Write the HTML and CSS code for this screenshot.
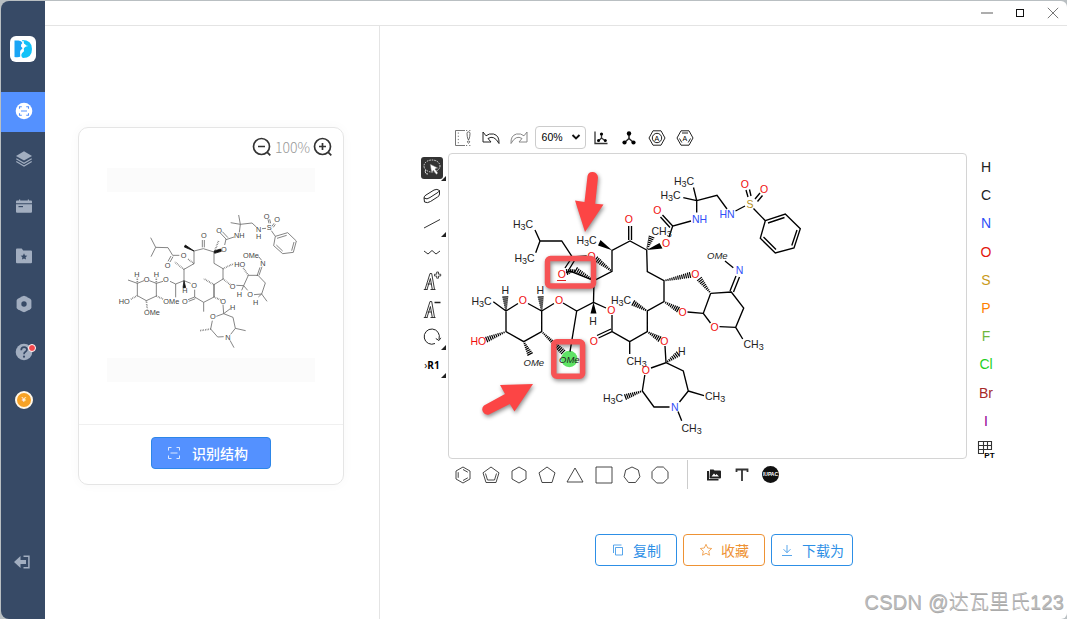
FILE: index.html
```
<!DOCTYPE html>
<html lang="zh-CN">
<head>
    <meta charset="UTF-8">
    <meta name="viewport" content="width=device-width, initial-scale=1.0">
    <title>识别结构</title>
    <link rel="stylesheet" href="styles.css">
</head>
<body>
    <div class="window">
        <nav class="sidebar">
            <div class="logo">
                <svg width="20" height="20" viewBox="0 0 20 20"><path d="M1.500 1.500h4q3 0 4 2.500q-2 1-1.500 3.500l2 2q-3 1-3 4l1 3.500q-2 2-6.500 1z" fill="#1aa5f5"/><path d="M9 1q10 0 10 9t-9 9q-3-2-2-4l3-3q-1-3 1-4l1-2q-3-1-4-5z" fill="#12c2f8"/><path d="M10 2q0 4 3 5q-4 1-3 5q-3 2-2 6" fill="none" stroke="#fff" stroke-width="1.200"/></svg>
            </div>
            <div class="nav-item active">
                <svg width="18" height="18" viewBox="0 0 18 18"><circle cx="9" cy="9" r="8.300" fill="#fff"/><path d="M4.500 6.800V4.700h2.300M11.200 4.700h2.300v2.100M13.500 11.200v2.100h-2.300M6.800 13.300H4.500v-2.100M6 9h6" fill="none" stroke="#5491ff" stroke-width="1.100"/></svg>
            </div>
            <div class="nav-item">
                <svg width="18" height="18" viewBox="0 0 18 18"><path d="M9 1.200L17 6 9 10.600 1 6z" fill="#a2aec0"/><path d="M1.300 8.800L9 13.200l7.700-4.400M1.300 11.600L9 16l7.700-4.400" fill="none" stroke="#a2aec0" stroke-width="1.200"/></svg>
            </div>
            <div class="nav-item">
                <svg width="18" height="18" viewBox="0 0 18 18"><path d="M1 5.200V3.500q0-1 1-1h2V1.400h1.200v1.100h7.600V1.400H14v1.100h2q1 0 1 1v1.700zM1 6.300h16v7.500q0 1-1 1H2q-1 0-1-1z" fill="#a2aec0"/><path d="M3.500 8.600H8" stroke="#374a66" stroke-width="1.200"/></svg>
            </div>
            <div class="nav-item">
                <svg width="18" height="18" viewBox="0 0 18 18"><path d="M1 2.600q0-1 1-1h4.700l1.500 1.900H16q1 0 1 1v10.700q0 1-1 1H2q-1 0-1-1z" fill="#a2aec0"/><path d="M9 6.300l1 2.100 2.300.3-1.700 1.600.4 2.300-2-1.100-2 1.100.4-2.300-1.700-1.600 2.300-.3z" fill="#374a66"/></svg>
            </div>
            <div class="nav-item">
                <svg width="18" height="18" viewBox="0 0 18 18"><path d="M7.600 1.200q1.400-.7 2.800 0l4.800 2.600q1.200.8 1.200 2v6.400q0 1.300-1.200 2l-4.800 2.600q-1.400.7-2.800 0l-4.800-2.600q-1.200-.7-1.200-2V5.800q0-1.200 1.200-2z" fill="#a2aec0"/><circle cx="9" cy="9" r="2.700" fill="#374a66"/></svg>
            </div>
            <div class="nav-item">
                <svg width="18" height="18" viewBox="0 0 18 18"><circle cx="9" cy="9" r="8.300" fill="#a2aec0"/><path d="M6.200 7.200q0-3 2.900-3t2.900 2.400q0 1.300-1.500 2.200T9 11.200" fill="none" stroke="#374a66" stroke-width="1.700"/><circle cx="9" cy="13.700" r="1.100" fill="#374a66"/></svg>
                <span class="dot"></span>
            </div>
            <div class="nav-item">
                <div class="coin">¥</div>
            </div>
            <div class="nav-item logout">
                <svg width="18" height="16" viewBox="0 0 18 16"><path d="M1 8l6.500-6v4h5.500v4H7.500v4z" fill="#a2aec0"/><path d="M10.500 2.200h5.400v11.600h-5.400" fill="none" stroke="#a2aec0" stroke-width="1.500"/></svg>
            </div>
        </nav>

        <div class="page">
            <header class="titlebar">
                <svg width="12" height="12" viewBox="0 0 12 12"><path d="M0 6h12" stroke="#777" stroke-width="1.200"/></svg>
                <svg width="12" height="12" viewBox="0 0 12 12"><rect x="2.500" y="2.500" width="7" height="7" fill="none" stroke="#111"/></svg>
                <svg width="12" height="12" viewBox="0 0 12 12"><path d="M.8 .8l10.400 10.400M11.200 .8L.8 11.200" stroke="#777"/></svg>
            </header>

            <div class="content">
                <section class="source">
                    <div class="card">
                        <div class="zoom-bar">
                            <svg width="20" height="20" viewBox="0 0 20 20"><circle cx="9.500" cy="9.500" r="8" /><path d="M6 9.500h7M15.300 15.300l3 3"/></svg>
                            <span>100%</span>
                            <svg width="20" height="20" viewBox="0 0 20 20"><circle cx="9.500" cy="9.500" r="8" /><path d="M6 9.500h7M9.500 6v7M15.300 15.300l3 3"/></svg>
                        </div>
                        <div class="preview">
                            <div class="band"></div>
                            <svg class="scan" width="210" height="155" viewBox="0 0 630 465">
                                <path d="M152 113l15 29l-14 28M167 142l37 1l14 23l20 0M213 168l-9 16M219 170l-9 16M282 153l0 38l-30 17v34M282 153l28-7M310 146l32 10M307 142v-22M313 142v-22M342 156v34l27 16v31l-27 17v37l-31 16M342 254v37M311 307v28M311 307l-27-16M284 291v-22M284 291l-20 8M286 296l-20 8M252 242l20 8M227 252v40M227 252l-17-8M227 252l25-10M189 244l-20 6M169 250v38l-30 14l-27-15v-37l20-8M148 242l21 8M112 250l-28-10M378 117l-17-18M384 113l-17-18M378 119l24-8M378 117l-4 18M421 73l-5-28M421 73l-29-5M418 97l3-24l35-4l14 13M486 86l12-1M507 70l-3-12M512 70l-3-12M516 79l6-9M520 82l6-9M514 92l12 17M526 109l37-11l26 25l-9 34l-32 4l-27-24zM531 115l29-9M582 126l-7 26M548 153l-19-18M476 170l9 11M486 200l-9 26M480 202l-9 26M474 226l-29 0l-14 31l12 14M474 226l22 23l-11 33l-23 2M485 282l16 22M431 257l-22-1M431 257l-6 14M485 282l-10 9M369 314l2 27l-22 8M371 341l28 11l7 33l-14 18M406 385l31 7M332 387l5-25M332 387l21 24l18-1M390 421l12 22M371 341l20-15"/>
                                <path class="heavy" d="M282 153l-29-12l3-6zM342 153l20-6l2 7l-20 6zM252 242l5 21l-8 0z"/>
                                <path class="dashed" d="M344 153l12-31M282 191l-20-15M252 208l-28-22M342 254l-31-18M369 206l32-15M369 237l22 17M342 291l20 9M169 250v-18M112 250v-18M112 287l-22 12M139 302l3 26M169 288l22 10M445 226l-15-22M332 387l-33 5"/>
                                <g class="scan-text">
                                    <text x="303" y="115">O</text><text x="349" y="99">O</text><text x="363" y="155">O</text><text x="402" y="113">NH</text><text x="468" y="95">N</text><text x="468" y="118">H</text><text x="500" y="91">S</text><text x="491" y="57">O</text><text x="523" y="65">O</text><text x="242" y="173">O</text><text x="194" y="204">O</text><text x="103" y="230">H</text><text x="161" y="230">H</text><text x="131" y="246">O</text><text x="189" y="246">O</text><text x="247" y="280">H</text><text x="274" y="264">O</text><text x="246" y="312">O</text><text x="190" y="312">OMe</text><text x="56" y="312">HO</text><text x="132" y="345">OMe</text><text x="361" y="312">O</text><text x="390" y="329">H</text><text x="330" y="358">O</text><text x="376" y="419">N</text><text x="389" y="266">O</text><text x="403" y="202">HO</text><text x="429" y="173">OMe</text><text x="481" y="198">N</text><text x="410" y="290">H</text><text x="442" y="291">O</text><text x="459" y="314">H</text>
                                </g>
                            </svg>
                            <div class="band"></div>
                        </div>
                        <div class="card-footer">
                            <button class="btn-primary">
                                <svg width="14" height="14" viewBox="0 0 14 14"><path d="M1.500 4.500v-3h3M9.500 1.500h3v3M12.500 9.500v3h-3M4.500 12.500h-3v-3M3.500 7h7"/></svg>
                                识别结构
                            </button>
                        </div>
                    </div>
                </section>

                <section class="result">
                    <div class="editor">
                        <div class="tools-top">
                            <div class="tool"><svg width="20" height="20" viewBox="0 0 20 20"><path d="M12 2.500H2.500v15H12" fill="none" stroke="#666" stroke-width=".9"/><path d="M5.300 4.500v12M13 2.500h5M13 17.500h5" stroke="#777" stroke-dasharray="1.200 2"/><path d="M14 5.500q0-1.700 1.500-1.700t1.500 1.700q0 2.500-1 6h-1q-1-3.500-1-6zM15.500 13a1 1 0 1 0 .1 0" fill="none" stroke="#444" stroke-width=".8"/></svg></div>
                            <div class="tool"><svg width="20" height="20" viewBox="0 0 20 20"><path d="M2 4v10h8l-3-3.500q6-4 11 5q.5-8-5.500-9.500q-4.500-.8-7.500 1.800z" fill="none" stroke="#222"/></svg></div>
                            <div class="tool"><svg width="20" height="20" viewBox="0 0 20 20"><path d="M18 4v10h-8l3-3.500q-6-4-11 5q-.5-8 5.500-9.500q4.500-.8 7.500 1.800z" fill="none" stroke="#888"/></svg></div>
                            <div class="zoom-select">60%<svg width="10" height="8" viewBox="0 0 10 8"><path d="M1.500 2l3.500 3.500L8.500 2" fill="none" stroke="#111" stroke-width="1.900"/></svg></div>
                            <div class="tool"><svg width="16" height="16" viewBox="0 0 16 16"><path d="M2 1.500v12h12.500M8.500 4v4l-3 3M8.500 8l4 3" fill="none" stroke="#333" stroke-width="1.300"/><circle cx="8.500" cy="4" r="1.600"/><circle cx="5.500" cy="10.500" r="1.500"/><circle cx="12.300" cy="10.500" r="1.500"/></svg></div>
                            <div class="tool"><svg width="16" height="16" viewBox="0 0 16 16"><path d="M8 3.500v5L3.500 12.500M8 8.500l4.500 4" fill="none" stroke="#222" stroke-width="1.500"/><circle cx="8" cy="3.500" r="2.200"/><circle cx="3.500" cy="12.500" r="2.100"/><circle cx="12.500" cy="12.500" r="2.100"/></svg></div>
                            <div class="tool"><svg width="18" height="18" viewBox="0 0 18 18"><path d="M5 1.800h8L17 9l-4 7.200H5L1 9z" fill="none" stroke="#222"/><circle cx="9" cy="9" r="4.700" fill="none" stroke="#222"/><text x="6.600" y="11.500" font-size="7">A</text></svg></div>
                            <div class="tool"><svg width="18" height="18" viewBox="0 0 18 18"><path d="M5 1.800h8L17 9l-4 7.200H5L1 9zM6 4h6M14.500 9.500l-2.300 4M3.500 9.500l2.300 4" fill="none" stroke="#222"/><text x="6.600" y="11.500" font-size="7">A</text></svg></div>
                        </div>

                        <div class="tools-left">
                            <div class="tool selected more"><svg width="22" height="22" viewBox="0 0 22 22"><ellipse cx="11" cy="9" rx="8" ry="6" fill="none" stroke="#ddd" stroke-dasharray="1.500 1"/><path d="M4.500 13q-1 4 2.500 4" fill="none" stroke="#ddd"/><path d="M9 7l8 4-3 1 3 4-1.700 1.400-3-4-1.600 2.700z" fill="#fff" stroke="#555" stroke-width=".5"/></svg></div>
                            <div class="tool"><svg width="20" height="20" viewBox="0 0 20 20"><path d="M2 12q0-2 2-3l8-5q3-1.500 5.500.5v3.500q0 2-2 3l-7 4.500q-3 2-6 .5zM2 12q3 2 6-.5l7-4.500q2-1 2.500-2.500" fill="none" stroke="#222"/></svg></div>
                            <div class="tool more"><svg width="20" height="20" viewBox="0 0 20 20"><path d="M2 14L18 5.500" stroke="#333"/></svg></div>
                            <div class="tool"><svg width="20" height="20" viewBox="0 0 20 20"><path d="M2 8l4 3 4-3.500 4 3.500 4-3" fill="none" stroke="#333"/></svg></div>
                            <div class="tool"><svg width="20" height="20" viewBox="0 0 20 20"><path d="M1.800 18.500h3.800M8.500 18.500h5M3 18.500L8 2.500h1.700l2.800 16M5 18.500l3.400-11 1.900 11M5.500 13h4" fill="none" stroke="#222" stroke-width=".9"/><path d="M12.500 3.200h2.200V1h1.800v2.200h2.200v1.800h-2.200v2.200h-1.800v-2.200h-2.200z" fill="none" stroke="#222" stroke-width=".8"/></svg></div>
                            <div class="tool"><svg width="20" height="20" viewBox="0 0 20 20"><path d="M1.800 18.500h3.800M8.500 18.500h5M3 18.500L8 2.500h1.700l2.800 16M5 18.500l3.400-11 1.900 11M5.500 13h4" fill="none" stroke="#222" stroke-width=".9"/><path d="M12.500 3.500h6" stroke="#222" stroke-width="1.500"/></svg></div>
                            <div class="tool more"><svg width="20" height="20" viewBox="0 0 20 20"><path d="M13 16.500A7.600 7.600 0 1 1 17 12" fill="none" stroke="#222"/><path d="M13.800 11.500l3.200 2 1.800-2.700" fill="none" stroke="#222"/></svg></div>
                            <div class="tool more r-group"><span>›</span>R1</div>
                        </div>

                        <div class="canvas">
                            <svg id="molecule" width="517" height="304" viewBox="449 154 517 304">
                                <circle cx="569.300" cy="359" r="8.300" fill="#5fe365"/>
                                <path class="bond" d="M693.500 187.500L696.700 200.700L683.300 197.700M696.700 200.700L717 195.300L727 209M696.700 200.700V212.500M735.500 211L745 206M753.500 208.500L765.300 220.700M765.300 220.700L785.300 214L800.300 228.700L794 248L775.300 253L760.300 238.300ZM768 223L784.500 217.500M797 230L791.800 245.500M776 249.500L763.500 237M691 221L672.700 226L669 237M672.700 226L662.500 215M670 227.500L660.500 217M646.700 250L630 241L612 250.300V271.300L594 280.700L593.500 302.300L576.700 311L563 303M628.700 240V226M631.500 240V226M646.700 250L647.300 271.700L664 280.700V301.700L647.300 311V331.700L629.700 341.700V354M629.700 341.700L612 331.700V315M612 331.700L598.500 338M611 329L597 335.500M593.500 302.300L606 308M586.700 256L572.300 257L561.700 241H540L535 230M540 241L535.700 252.700M572.300 257L565 268M576 258L569 269.500M594 280.700L570 271L566 272.500M493.300 301.700L506 311L518 303.500M528 303.500L541.700 311L554 303.500M541.700 311V331.700L523.700 341.700L506 331.700V311M576.700 311L570 351.700M746 190L748 197M749.500 189.500L751 196M755 199L760 193M757.500 201.500L762.500 195.500M710.700 293.300L731.300 292L743.700 308L735.700 327.300L719.500 326.700M710.700 293.300L703.300 313.300L710.500 323M703.300 313.300L687.500 312M735.700 327.300L742.700 339M730 291L736 276M733.500 292L739.500 277M733.300 267.700L725 261M665 346L666 362.700L651 368M666 362.700L683.300 371L688.300 391L679.500 402M688.300 391L704 395.700M669.500 407L654 407L642.300 391L644.800 375M678 411.500L681.700 420.700"/>
                                <path class="wedge" d="M646.700 250L659.500 243L662.500 248.500ZM612 250.300L600.500 240L598 245.500ZM593.500 302.300L590.500 313.500H596.500Z"/>
                                <!-- hashed bonds are added by script.js -->
                                <g class="label">
                                    <text x="674" y="184.500">H<tspan>3</tspan>C</text>
                                    <text x="660.500" y="199">H<tspan>3</tspan>C</text>
                                    <text x="651.500" y="234.500">CH<tspan>3</tspan></text>
                                    <text x="576.500" y="243.500">H<tspan>3</tspan>C</text>
                                    <text x="513" y="227.500">H<tspan>3</tspan>C</text>
                                    <text x="514.500" y="262">H<tspan>3</tspan>C</text>
                                    <text x="471.500" y="304.500">H<tspan>3</tspan>C</text>
                                    <text x="501.500" y="293.500">H</text>
                                    <text x="536.500" y="293.500">H</text>
                                    <text x="589.200" y="324.500">H</text>
                                    <text x="678" y="354.500">H</text>
                                    <text x="611" y="304">H<tspan>3</tspan>C</text>
                                    <text x="626.500" y="364.500">CH<tspan>3</tspan></text>
                                    <text x="743.500" y="347.500">CH<tspan>3</tspan></text>
                                    <text x="603" y="401.500">H<tspan>3</tspan>C</text>
                                    <text x="705" y="400">CH<tspan>3</tspan></text>
                                    <text x="681.500" y="431.500">CH<tspan>3</tspan></text>
                                    <text class="ome" x="707" y="258.500">OMe</text>
                                    <text class="ome" x="523.500" y="365.500">OMe</text>
                                    <text class="ome" x="559" y="362.500">OMe</text>
                                </g>
                                <g class="label oxygen">
                                    <text x="624.700" y="222.500">O</text>
                                    <text x="653.300" y="213.500">O</text>
                                    <text x="662" y="247">O</text>
                                    <text x="740.700" y="187.500">O</text>
                                    <text x="760" y="192.500">O</text>
                                    <text x="587.500" y="259.500">O</text>
                                    <text x="557.700" y="277.500">O</text>
                                    <text x="518.800" y="304">O</text>
                                    <text x="555" y="304">O</text>
                                    <text x="607.300" y="314">O</text>
                                    <text x="589.800" y="344.500">O</text>
                                    <text x="470.500" y="344.500">HO</text>
                                    <text x="691.200" y="278">O</text>
                                    <text x="678.500" y="315.500">O</text>
                                    <text x="710.500" y="330.500">O</text>
                                    <text x="660.200" y="345">O</text>
                                    <text x="641.700" y="374">O</text>
                                </g>
                                <path d="M557 280.500h9" stroke="#d22" stroke-width="1"/>
                                <g class="label nitrogen">
                                    <text x="692" y="222.500">NH</text>
                                    <text x="719.500" y="218">HN</text>
                                    <text x="735.700" y="274">N</text>
                                    <text x="671" y="410.500">N</text>
                                </g>
                                <text class="sulfur" x="746.500" y="208">S</text>
                                <g class="marks">
                                    <rect x="547.500" y="258.500" width="46" height="27.500" rx="3"/>
                                    <rect x="553.800" y="341.800" width="28.800" height="34.500" rx="3"/>
                                    <path d="M587.500 176q1-4.500 5.500-4t5 5.500l-2.800 26.300l8.300 .8L585 232L575 200.500l9.500 1.500z"/>
                                    <path d="M484 405.500L505 394l-5-9l33-1l-18.500 27.500l-4.700-7.500L489 414.500q-4 1-6-2.500t1-6.500z"/>
                                </g>
                            </svg>
                        </div>

                        <div class="atoms">
                            <div class="atom">H</div>
                            <div class="atom">C</div>
                            <div class="atom n">N</div>
                            <div class="atom o">O</div>
                            <div class="atom s">S</div>
                            <div class="atom p">P</div>
                            <div class="atom f">F</div>
                            <div class="atom cl">Cl</div>
                            <div class="atom br">Br</div>
                            <div class="atom i">I</div>
                            <div class="atom"><svg width="18" height="18" viewBox="0 0 18 18"><path d="M1.500 1.500h13v8h-8v4h-5zM1.500 5.500h13M1.500 9.500h5M6.500 1.500v8M10.500 1.500v8" fill="none" stroke="#333" stroke-width="1.100"/><text x="7.300" y="17.500" font-size="8" font-weight="bold">PT</text></svg></div>
                        </div>

                        <div class="tools-bottom">
                            <div class="tool"><svg class="ring" width="20" height="20" viewBox="0 0 20 20"><path d="M10 2l7 4v8l-7 4-7-4V6zM10 4.500l4.800 2.700M14.800 12.800L10 15.500M5.200 7.200v5.600"/></svg></div>
                            <div class="tool"><svg class="ring" width="20" height="20" viewBox="0 0 20 20"><path d="M10 2l8 5.800L15 17.500H5L2 7.800zM4.500 8.500l2 6.500M15.500 8.500l-2 6.500M6.500 15h7"/></svg></div>
                            <div class="tool"><svg class="ring" width="20" height="20" viewBox="0 0 20 20"><path d="M10 2l7 4v8l-7 4-7-4V6z"/></svg></div>
                            <div class="tool"><svg class="ring" width="20" height="20" viewBox="0 0 20 20"><path d="M10 2l8 5.800L15 17.500H5L2 7.800z"/></svg></div>
                            <div class="tool"><svg class="ring" width="20" height="20" viewBox="0 0 20 20"><path d="M10 3l8 14H2z"/></svg></div>
                            <div class="tool"><svg class="ring" width="20" height="20" viewBox="0 0 20 20"><path d="M2 2h16v16H2z"/></svg></div>
                            <div class="tool"><svg class="ring" width="20" height="20" viewBox="0 0 20 20"><path d="M10 2l6.300 3 1.600 6.800-4.400 5.700h-7l-4.400-5.700L3.700 5z"/></svg></div>
                            <div class="tool"><svg class="ring" width="20" height="20" viewBox="0 0 20 20"><path d="M6.700 2h6.600L18 6.700v6.600L13.300 18H6.700L2 13.300V6.700z"/></svg></div>
                            <div class="divider"></div>
                            <div class="tool"><svg width="16" height="16" viewBox="0 0 16 16"><path d="M1 4v9.500h11.500V12H3V4zM4 2.500h3.500l1 1H14q1 0 1 1v6q0 1-1 1H4.500q-1 0-1-1z" fill="#222"/><path d="M5.500 9.500l2.500-3 1.500 1.800 1-1.300 2.500 2.500z" fill="#fff"/></svg></div>
                            <div class="tool"><svg width="16" height="16" viewBox="0 0 16 16"><path d="M2.500 5V2.500h11V5M8 2.500V14" fill="none" stroke="#333" stroke-width="1.800"/></svg></div>
                            <div class="tool"><div class="iupac">IUPAC</div></div>
                        </div>
                    </div>

                    <div class="actions">
                        <button class="btn"><svg width="14" height="14" viewBox="0 0 14 14"><path d="M4.500 4.500h7v7.500h-7zM2.500 10V2h8"/></svg>复制</button>
                        <button class="btn orange"><svg width="14" height="14" viewBox="0 0 14 14"><path d="M7 1.300l1.700 3.700 4 .5-3 2.700.8 4L7 10.300l-3.500 1.900.8-4-3-2.700 4-.5z"/></svg>收藏</button>
                        <button class="btn"><svg width="14" height="14" viewBox="0 0 14 14"><path d="M7 2v7.500M3.500 6.200L7 9.700l3.500-3.500M2 12.500h10"/></svg>下载为</button>
                    </div>
                </section>
            </div>
        </div>
    </div>
    <div class="watermark">CSDN @达瓦里氏123</div>

    <script src="script.js"></script>
</body>
</html>
```

FILE: styles.css
```
* {
    box-sizing: border-box;
}
body, html {
    height: 100%;
    margin: 0;
    overflow: hidden;
    font-family: 'Liberation Sans', 'Noto Sans CJK SC', sans-serif;
    background-color: #b9bfc2;
}
svg {
    display: block;
    flex: none;
}
.window {
    display: flex;
    height: 100%;
    padding: 1px 0 0 1px;
}
.sidebar {
    width: 44px;
    display: flex;
    flex-direction: column;
    align-items: center;
    gap: 8.2px;
    padding: 35px 0 37px;
    background-color: #374a66;
    border-radius: 8px 0 0 8px;
}
.logo {
    width: 26px;
    height: 26px;
    margin-bottom: 21.8px;
    display: flex;
    align-items: center;
    justify-content: center;
    background-color: #fff;
    border-radius: 6px;
}
.nav-item {
    position: relative;
    width: 44px;
    height: 40px;
    flex: none;
    display: flex;
    align-items: center;
    justify-content: center;
    padding: 0 0 2px 2px;
}
.nav-item.active {
    background-color: #5491ff;
}
.dot {
    position: absolute;
    top: 11px;
    left: 27px;
    width: 8px;
    height: 8px;
    background-color: #f5484d;
    border: 1px solid #fff;
    border-radius: 50%;
}
.coin {
    width: 18px;
    height: 18px;
    border: 2px solid #fff7e8;
    border-radius: 50%;
    background-color: #f7a226;
    color: #fff;
    font-size: 8px;
    line-height: 14px;
    text-align: center;
}
.logout {
    margin-top: auto;
    padding: 0 2px 0 0;
}
.page {
    flex: 1;
    display: flex;
    flex-direction: column;
    background-color: #fff;
    border-radius: 0 6px 6px 0;
}
.titlebar {
    height: 25px;
    display: flex;
    align-items: center;
    justify-content: flex-end;
    gap: 21px;
    padding-right: 8px;
    border-bottom: 1px solid #e4e4e4;
}
.content {
    flex: 1;
    display: flex;
}

/* left pane */
.source {
    width: 335px;
    padding: 101px 0 0 33px;
    border-right: 1px solid #e4e4e4;
}
.card {
    width: 266px;
    height: 358px;
    display: flex;
    flex-direction: column;
    border: 1px solid #e5e5e5;
    border-radius: 10px;
    box-shadow: 0 0 12px rgba(0, 0, 0, 0.03);
}
.zoom-bar {
    height: 40px;
    display: flex;
    align-items: center;
    justify-content: flex-end;
    gap: 3px;
    padding: 0 10px 3px 0;
    color: #999;
    font-family: 'Noto Sans CJK SC', sans-serif;
    font-size: 14px;
    font-weight: 300;
}
.zoom-bar svg {
    fill: none;
    stroke: #333;
    stroke-width: 1.7;
}
.preview {
    flex: 1;
    padding: 0 28px;
}
.band {
    height: 24px;
    background-color: #fbfbfb;
}
.scan {
    margin: 8px 0 3px -7px;
    fill: none;
    stroke: #666;
    stroke-width: 2.4;
}
.heavy {
    fill: #111;
    stroke: #111;
}
.dashed {
    stroke-width: 5;
    stroke-dasharray: 2 3;
}
.scan-text {
    fill: #444;
    stroke: none;
    font-size: 22px;
}
.card-footer {
    height: 60px;
    display: flex;
    justify-content: center;
    padding-top: 12px;
    border-top: 1px solid #f0f0f0;
}
button {
    font-family: 'Noto Sans CJK SC', sans-serif;
    font-size: 14px;
    border-radius: 4px;
    padding: 0;
    display: flex;
    align-items: center;
    justify-content: center;
}
button svg {
    fill: none;
    stroke: currentColor;
    stroke-width: 0.8;
}
.btn-primary {
    width: 120px;
    height: 32px;
    gap: 11px;
    padding-right: 7px;
    border: 1px solid #2d86e8;
    background-color: #5491ff;
    color: #fff;
    font-weight: 500;
}

/* right pane */
.result {
    flex: 1;
    padding: 97px 0 0 36px;
}
.editor {
    display: grid;
    grid-template-columns: 32px 519px 38px;
    grid-template-rows: 30px 306px 32px;
}
.tool {
    position: relative;
    width: 28.2px;
    height: 28px;
    flex: none;
    display: flex;
    align-items: center;
    justify-content: center;
}
.tools-top {
    grid-column: 2;
    grid-row: 1;
    display: flex;
    align-items: center;
    padding-left: 0.6px;
}
.zoom-select {
    width: 51px;
    height: 23px;
    margin: 0 1px 2px 1.4px;
    padding: 0 4px 0 6px;
    display: flex;
    align-items: center;
    justify-content: space-between;
    border: 1px solid #ccc;
    border-radius: 4px;
    font-size: 10.5px;
}
.tools-left {
    grid-column: 1;
    grid-row: 2;
    display: flex;
    flex-direction: column;
    align-items: center;
    padding-top: 1px;
    gap: 0.2px;
}
.selected svg {
    background-color: #333;
    border-radius: 3px;
}
.more::after {
    content: '';
    position: absolute;
    right: 0;
    bottom: 1px;
    border-left: 5px solid transparent;
    border-bottom: 5px solid #222;
}
.r-group {
    font-family: 'Open Sans', sans-serif;
    font-size: 10px;
    font-weight: bold;
}
.r-group span {
    font-weight: normal;
}
.canvas {
    grid-column: 2;
    grid-row: 2;
    border: 1px solid #d4d4d4;
    border-radius: 4px;
}
.bond {
    fill: none;
    stroke: #000;
    stroke-width: 1.35;
}
.wedge {
    fill: #000;
}
.hash {
    stroke: #000;
    stroke-width: 1.2;
}
.label {
    font-size: 10.5px;
    fill: #222;
}
.label tspan {
    font-size: 9px;
    baseline-shift: -1.5px;
}
.label .ome {
    font-size: 9.5px;
    font-style: italic;
}
.label.oxygen {
    fill: #f00d0d;
}
.label.nitrogen {
    fill: #304ff7;
}
.sulfur {
    font-size: 10.5px;
    fill: #b38c1a;
}
.marks {
    fill: #fc4545;
    filter: drop-shadow(1px 2px 2px rgba(0, 0, 0, 0.45));
}
.marks rect {
    fill: none;
    stroke: #f65355;
    stroke-width: 5.5;
}
.atoms {
    grid-column: 3;
    grid-row: 2;
    display: flex;
    flex-direction: column;
}
.atom {
    height: 28.2px;
    flex: none;
    display: flex;
    align-items: center;
    justify-content: center;
    font-size: 14px;
    color: #222;
}
.n {
    color: #304ff7;
}
.o {
    color: #e3170d;
}
.s {
    color: #c99a19;
}
.p {
    color: #ff8000;
}
.f {
    color: #6fb63c;
}
.cl {
    color: #1fcf1f;
}
.br {
    color: #a62929;
}
.i {
    color: #940094;
}
.tools-bottom {
    grid-column: 2;
    grid-row: 3;
    display: flex;
    align-items: center;
    padding: 0 0 1px 0.5px;
}
.ring {
    fill: none;
    stroke: #333;
    stroke-width: 0.9;
}
.divider {
    width: 1px;
    height: 29px;
    margin: 0 12px 0 13px;
    background-color: #ccc;
}
.iupac {
    width: 17px;
    height: 17px;
    border-radius: 50%;
    background-color: #111;
    color: #fff;
    font-size: 5px;
    font-weight: bold;
    line-height: 17px;
    text-align: center;
}
.actions {
    display: flex;
    gap: 6px;
    padding: 43px 0 0 179px;
}
.btn {
    width: 82px;
    height: 32px;
    gap: 8px;
    background-color: #fff;
    border: 1px solid #2d8fe6;
    color: #2d8fe6;
}
.btn.orange {
    border-color: #ee9234;
    color: #ee9234;
}
.watermark {
    position: absolute;
    right: 3px;
    bottom: 3px;
    color: #bababa;
    font-size: 20px;
    font-weight: 300;
    letter-spacing: 0.3px;
    line-height: 28px;
    text-shadow: 0.5px 0.5px 0 #aaa;
    white-space: nowrap;
}
```

FILE: script.js
```
// x1,y1 = narrow end, x2,y2 = wide end
let hashed = [
    [646.7, 250, 651.5, 237],
    [612, 271.3, 596, 259],
    [594, 280.7, 576, 270],
    [576, 270, 567, 272],
    [506, 311, 505.3, 297],
    [541.7, 311, 540.7, 297],
    [506, 331.7, 486.7, 339.5],
    [523.7, 341.7, 530, 354],
    [541.7, 331.7, 563, 352],
    [647.3, 311, 633.3, 303],
    [664, 280.7, 690, 275],
    [710.7, 293.3, 699.5, 279],
    [664, 301.7, 678, 309.5],
    [647.3, 331.7, 659.5, 339],
    [666, 362.7, 678, 354],
    [642.3, 391, 625.5, 397]
];

let d = '';
hashed.forEach(b => {
    let dx = b[2] - b[0], dy = b[3] - b[1];
    let len = Math.hypot(dx, dy);
    let n = Math.round(len / 2);
    for (let i = 1; i <= n; i++) {
        let t = i / n;
        let w = 0.7 + 2.3 * t;
        let x = b[0] + dx * t, y = b[1] + dy * t;
        let ox = -dy / len * w, oy = dx / len * w;
        d += 'M' + (x - ox) + ' ' + (y - oy) + 'L' + (x + ox) + ' ' + (y + oy);
    }
});

let path = document.createElementNS('http://www.w3.org/2000/svg', 'path');
path.setAttribute('class', 'hash');
path.setAttribute('d', d);
let svg = document.getElementById('molecule');
svg.insertBefore(path, svg.querySelector('.label'));
```
